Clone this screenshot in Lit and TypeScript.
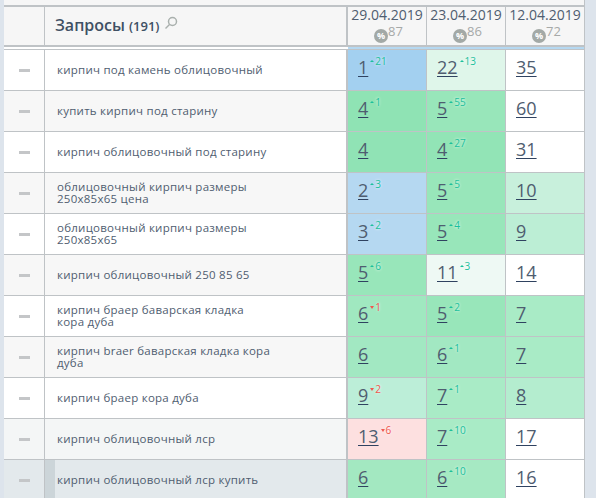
import { LitElement, html, css } from 'lit';
import { customElement } from 'lit/decorators.js';

type Cell = { pos: number; delta?: number; bg: string };
type Row = { q: string; bg?: string; mark?: boolean; cells: Cell[] };

const c = (pos: number, bg: string, delta?: number): Cell => ({ pos, bg, delta });

const rows: Row[] = [
  { q: 'кирпич под камень облицовочный', bg: '#fff', cells: [c(1, '#a3d0f0', 21), c(22, '#dff6ea', 13), c(35, '#fff')] },
  { q: 'купить кирпич под старину', cells: [c(4, '#8fe3b4', 1), c(5, '#98e6ba', 55), c(60, '#fff')] },
  { q: 'кирпич облицовочный под старину', bg: '#fff', cells: [c(4, '#90e3b5'), c(4, '#92e4b6', 27), c(31, '#fff')] },
  { q: 'облицовочный кирпич размеры 250х85х65 цена', cells: [c(2, '#b5d8f1', 3), c(5, '#98e6ba', 5), c(10, '#c8f0dc')] },
  { q: 'облицовочный кирпич размеры 250х85х65', bg: '#fff', cells: [c(3, '#b5d8f1', 2), c(5, '#98e6ba', 4), c(9, '#bceed5')] },
  { q: 'кирпич облицовочный 250 85 65', cells: [c(5, '#98e6ba', 6), c(11, '#eef9f4', 3), c(14, '#fff')] },
  { q: 'кирпич браер баварская кладка кора дуба', bg: '#fff', cells: [c(6, '#a0e8c0', -1), c(5, '#98e6ba', 2), c(7, '#a9ebc6')] },
  { q: 'кирпич braer баварская кладка кора дуба', cells: [c(6, '#a2e8c2'), c(6, '#a2e8c2', 1), c(7, '#a9ebc6')] },
  { q: 'кирпич браер кора дуба', bg: '#fff', cells: [c(9, '#bceed8', -2), c(7, '#a9ebc6', 1), c(8, '#b4edcf')] },
  { q: 'кирпич облицовочный лср', bg: '#f4f6f6', cells: [c(13, '#fde0e0', -6), c(7, '#a9ebc6', 10), c(17, '#fff')] },
  { q: 'кирпич облицовочный лср купить', bg: '#e3e9ec', mark: true, cells: [c(6, '#a3e8c1'), c(6, '#a6e9c3', 10), c(16, '#fff')] },
];

const dates = [
  { d: '29.04.2019', p: 87 },
  { d: '23.04.2019', p: 86 },
  { d: '12.04.2019', p: 72 },
];

@customElement('app-root')
export class AppRoot extends LitElement {
  static styles = css`
    :host {
      display: flex;
      width: 596px;
      height: 498px;
      overflow: hidden;
      background: #dde4ec;
      font-family: 'Open Sans', 'Noto Sans', sans-serif;
      color: #4f5d70;
    }
    .left {
      width: 4px;
      flex: none;
    }
    .table {
      width: 580px;
      flex: none;
      display: flex;
      flex-direction: column;
      background: #f6f6f6;
      border-right: 1px solid #bfc3c6;
      box-sizing: content-box;
    }
    .top {
      height: 5px;
      flex: none;
      border-bottom: 2px solid #bfc3c6;
    }
    .row {
      display: grid;
      grid-template-columns: 41px 303px 79px 79px 78px;
      height: 41px;
      flex: none;
      box-sizing: border-box;
      border-bottom: 1px solid #bfc3c6;
      background: #f7f7f7;
    }
    .head {
      height: 40px;
      background: #f6f6f6;
      border-bottom: 2px solid #bfc3c6;
    }
    .gap {
      height: 2px;
      flex: none;
      display: grid;
      grid-template-columns: 344px 1fr;
      border-bottom: 1px solid #bfc3c6;
      background: #fff;
      box-sizing: content-box;
    }
    .gap i {
      background: #b5d8f1;
      grid-column: 2;
    }
    .minus {
      display: flex;
      align-items: center;
      justify-content: center;
      border-right: 1px solid #bfc3c6;
    }
    .minus i {
      width: 11px;
      height: 3px;
      background: #c4c6c8;
    }
    .query {
      display: flex;
      align-items: center;
      padding-left: 12px;
      font-size: 11.5px;
      line-height: 12px;
      letter-spacing: 0.25px;
      border-right: 2px solid #bfc3c6;
    }
    .query span {
      max-width: 214px;
    }
    .query.mark {
      padding-left: 0;
    }
    .query .strip {
      width: 10px;
      align-self: stretch;
      flex: none;
      margin-right: 2px;
      background: #ccd5d9;
    }
    .title {
      display: flex;
      align-items: flex-start;
      padding: 8px 0 0 10px;
      font-size: 16px;
      line-height: 21px;
      font-weight: 600;
      color: #3f5064;
      border-right: 2px solid #bfc3c6;
    }
    .title small {
      font-size: 13px;
      margin-left: 4px;
      padding-top: 1px;
    }
    .title svg {
      margin: 1px 0 0 5px;
    }
    .date {
      font-size: 14px;
      line-height: 16px;
      text-align: center;
      border-right: 1px solid #bfc3c6;
      white-space: nowrap;
    }
    .date:last-child,
    .cell:last-child {
      border-right: none;
    }
    .pct {
      display: flex;
      justify-content: center;
      align-items: flex-start;
      height: 20px;
      margin: 1px 0 0 3px;
      color: #a6a9a8;
      font-size: 13px;
      line-height: 14px;
    }
    .pct b {
      width: 14px;
      height: 14px;
      margin-top: 5px;
      border-radius: 50%;
      background: #a3a9a6;
      color: #fff;
      font-size: 9px;
      line-height: 14px;
      font-weight: 700;
      text-align: center;
    }
    .cell {
      display: flex;
      align-items: flex-start;
      padding: 4px 0 0 10px;
      border-right: 1px solid #bfc3c6;
    }
    .cell a {
      font-size: 18px;
      line-height: 26px;
      color: #4f5d70;
      text-decoration: underline #2f4260;
      text-decoration-thickness: 1px;
      text-underline-offset: 2px;
    }
    .delta {
      display: flex;
      align-items: center;
      gap: 1px;
      margin: 1px 0 0 2px;
      font-size: 10px;
      line-height: 12px;
      text-shadow: 0 0 3px #fff;
    }
    .up {
      color: #1cc09c;
    }
    .down {
      color: #f0574f;
    }
    .up::before,
    .down::before {
      content: '';
      border-left: 2px solid transparent;
      border-right: 2px solid transparent;
    }
    .up::before {
      border-bottom: 2px solid #1cc09c;
    }
    .down::before {
      border-top: 3px solid #f0574f;
    }
    .right {
      flex: 1;
    }
  `;

  render() {
    return html`
      <div class="left"></div>
      <div class="table">
        <div class="top"></div>
        <div class="row head">
          <div class="minus"></div>
          <div class="title">
            Запросы <small>(191)</small>
            <svg width="14" height="14" viewBox="0 0 14 14" fill="none" stroke="#a9b0ad" stroke-width="1.5">
              <circle cx="8.5" cy="5.5" r="4" />
              <path d="M5.5 8.5 1.5 12.5" />
            </svg>
          </div>
          ${dates.map(
            (x) => html`<div class="date">${x.d}<div class="pct"><b>%</b>${x.p}</div></div>`,
          )}
        </div>
        <div class="gap"><i></i></div>
        ${rows.map(
          (r) => html`
            <div class="row" style=${r.bg ? `background:${r.bg}` : ''}>
              <div class="minus"><i></i></div>
              <div class="query ${r.mark ? 'mark' : ''}">
                ${r.mark ? html`<i class="strip"></i>` : ''}
                <span>${r.q}</span>
              </div>
              ${r.cells.map(
                (x) => html`
                  <div class="cell" style="background:${x.bg}">
                    <a>${x.pos}</a>
                    ${x.delta
                      ? html`<span class="delta ${x.delta > 0 ? 'up' : 'down'}">${Math.abs(x.delta)}</span>`
                      : ''}
                  </div>
                `,
              )}
            </div>
          `,
        )}
      </div>
      <div class="right"></div>
    `;
  }
}
